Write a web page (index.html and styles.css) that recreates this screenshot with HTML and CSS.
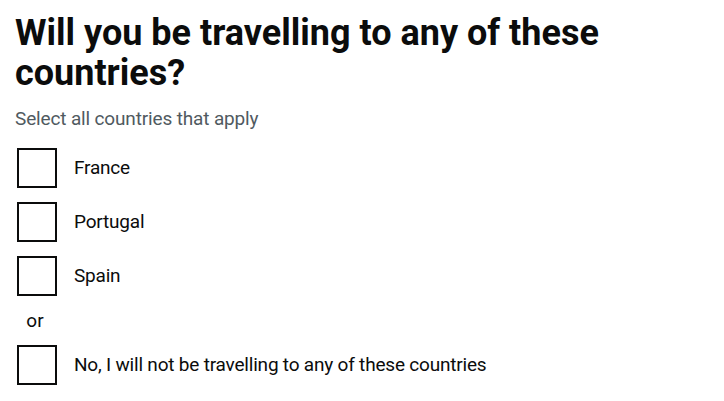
FILE: index.html
```html
<!DOCTYPE html>
<html lang="en">
<head>
<meta charset="utf-8">
<title>Countries</title>
<link rel="stylesheet" href="styles.css">
</head>
<body>
<main class="page">
  <form class="form-group">
    <fieldset class="fieldset">
      <legend class="legend">Will you be travelling to any of these countries?</legend>
      <div class="hint">Select all countries that apply</div>
      <div class="checkboxes">
        <div class="item">
          <input class="input" type="checkbox" id="c1">
          <label class="label" for="c1">France</label>
        </div>
        <div class="item">
          <input class="input" type="checkbox" id="c2">
          <label class="label" for="c2">Portugal</label>
        </div>
        <div class="item">
          <input class="input" type="checkbox" id="c3">
          <label class="label" for="c3">Spain</label>
        </div>
        <div class="divider">or</div>
        <div class="item">
          <input class="input" type="checkbox" id="c4">
          <label class="label" for="c4">No, I will not be travelling to any of these countries</label>
        </div>
      </div>
    </fieldset>
  </form>
</main>
</body>
</html>
```
FILE: styles.css
```css
html, body {
  margin: 0;
  padding: 0;
  background: #ffffff;
}
.page {
  padding: 11px 15px 0 15px;
  font-family: Roboto, "Noto Sans", "Liberation Sans", sans-serif;
  color: #0b0c0c;
}
.form-group {
  margin: 0;
}
.fieldset {
  margin: 0;
  padding: 0;
  border: 0;
  min-width: 0;
}
.legend {
  padding: 2px 0 0 0;
  margin: 0 0 13px 0;
  font-size: 36px;
  line-height: 40px;
  font-weight: 700;
}
.hint {
  font-size: 19px;
  line-height: 25px;
  letter-spacing: -0.15px;
  color: #505a5f;
  margin-bottom: 15px;
}
.checkboxes {
  display: flex;
  flex-direction: column;
}
.item {
  position: relative;
  display: flex;
  min-height: 44px;
  margin-bottom: 10px;
  padding-left: 44px;
}
.item:last-child {
  margin-bottom: 0;
}
.input {
  position: absolute;
  top: 0;
  left: 0;
  width: 44px;
  height: 44px;
  margin: 0;
  opacity: 0;
  z-index: 1;
}
.label {
  display: inline-block;
  padding: 9px 15px 4px;
  font-size: 19px;
  line-height: 25px;
  letter-spacing: -0.2px;
}
.label::before {
  content: "";
  box-sizing: border-box;
  position: absolute;
  top: 2px;
  left: 2px;
  width: 40px;
  height: 40px;
  border: 2px solid #0b0c0c;
  background: transparent;
}
.divider {
  width: 40px;
  margin-bottom: 10px;
  text-align: center;
  font-size: 19px;
  line-height: 25px;
}
```
